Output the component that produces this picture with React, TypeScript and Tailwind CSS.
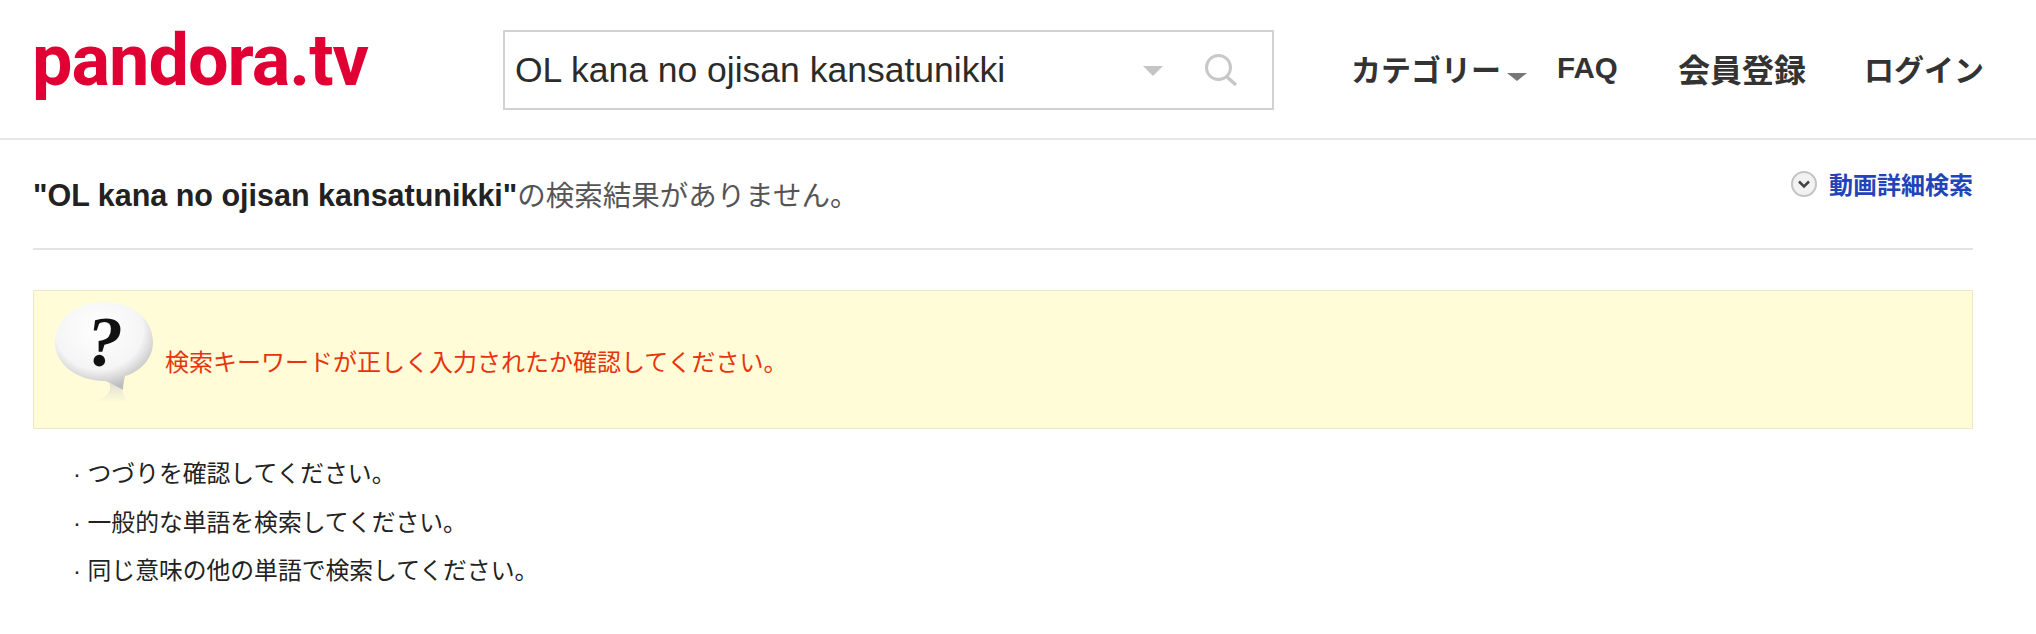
const JP = `font-['Liberation_Sans','Noto_Sans_CJK_JP',sans-serif]`;

const Bubble = () => (
  <svg width="100" height="100" viewBox="0 0 100 100" className="shrink-0 overflow-visible mb-[16px]">
    <defs>
      <radialGradient id="bub" cx="45%" cy="32%" r="66%">
        <stop offset="0%" stopColor="#ffffff" />
        <stop offset="68%" stopColor="#f5f5f5" />
        <stop offset="100%" stopColor="#bdbdbd" />
      </radialGradient>
      <linearGradient id="tail" x1="0" y1="0" x2="0" y2="1">
        <stop offset="0%" stopColor="#d8d8d8" />
        <stop offset="100%" stopColor="#fffcd7" />
      </linearGradient>
    </defs>
    <path d="M62 76 L72 100 L36 100 Q60 94 54 80 Z" fill="url(#tail)" />
    <path
      d="M49 0 C76 0 98 16 98 40 C98 58 84 70 70 74 C69 79 68 83 68 88 C62 85 57 81 50 79 C23 79 0 63 0 40 C0 16 23 0 49 0 Z"
      fill="url(#bub)"
    />
    <text
      x="50"
      y="64"
      textAnchor="middle"
      fontFamily="'Liberation Serif', serif"
      fontWeight="700"
      fontStyle="italic"
      fontSize="72"
      fill="#111111"
    >
      ?
    </text>
  </svg>
);

const SearchBox = () => (
  <div className="flex items-center w-[771px] h-[80px] mt-[2px] border-2 border-[#d2d2d2] pl-[10px] pr-[35px] shrink-0">
    <span className="flex-1 mt-[2px] text-[35.5px] text-[#2b2b2b] font-['Liberation_Sans',sans-serif]">
      OL kana no ojisan kansatunikki
    </span>
    <span className="w-0 h-0 border-x-[10px] border-x-transparent border-t-[10px] border-t-[#c4c4c4] mr-[42px] mt-[2px]" />
    <svg width="32" height="32" viewBox="0 0 32 32" fill="none" stroke="#c8c8c8">
      <circle cx="13.5" cy="13.5" r="12" strokeWidth="3" />
      <path d="M22 23 L31 31" strokeWidth="3.5" />
    </svg>
  </div>
);

const Nav = () => (
  <nav className={`flex items-start ml-[77px] text-[#333333] font-bold ${JP}`}>
    <span className="text-[30px] leading-[40px] mt-[4px] w-[150px] whitespace-nowrap">カテゴリー</span>
    <span className="w-0 h-0 border-x-[10px] border-x-transparent border-t-[8px] border-t-[#777777] mt-[26px] ml-[6px]" />
    <span className="text-[29.5px] leading-[34px] mt-[4px] ml-[30px] w-[62px]">FAQ</span>
    <span className="text-[32px] leading-[40px] mt-[4px] ml-[59px] w-[128px] whitespace-nowrap">会員登録</span>
    <span className="text-[30px] leading-[40px] mt-[4px] ml-[58px] whitespace-nowrap">ログイン</span>
  </nav>
);

export default function App() {
  return (
    <div className={`w-[2036px] h-[634px] bg-white overflow-hidden ${JP}`}>
      <header className="flex items-center h-[140px] border-b-2 border-[#e6e6e6] pl-[33px]">
        <div className="w-[470px] shrink-0 mb-[16px] -ml-[1px] mr-[1px] text-[72px] leading-[80px] font-bold text-[#e00034] tracking-[-1px] font-['Roboto',sans-serif]">
          pandora.tv
        </div>
        <SearchBox />
        <Nav />
      </header>

      <main className="pl-[33px] pr-[63px]">
        <div className="flex items-start justify-between h-[110px] border-b-2 border-[#e4e4e4]">
          <h1 className="mt-[35px] text-[28.5px] leading-[40px] text-[#555555] font-normal">
            <b className="text-[30.5px] text-[#222222] font-bold">"OL kana no ojisan kansatunikki"</b>の検索結果がありません。
          </h1>
          <a className="flex items-center mt-[28px] h-[36px] text-[24px] font-bold text-[#2244bb]">
            <svg width="26" height="26" viewBox="0 0 26 26" className="mr-[12px] -mt-[4px]">
              <circle cx="13" cy="13" r="12" fill="#f2f2f2" stroke="#c4c4c4" strokeWidth="2" />
              <path d="M8 10.5 L13 15.5 L18 10.5" fill="none" stroke="#444444" strokeWidth="2.5" />
            </svg>
            動画詳細検索
          </a>
        </div>

        <div className="flex items-center h-[139px] mt-[40px] pl-[21px] bg-[#fffcd7] border border-[#eee8c4]">
          <Bubble />
          <p className="ml-[10px] mt-[6px] text-[24px] text-[#e8340c]">
            検索キーワードが正しく入力されたか確認してください。
          </p>
        </div>

        <ul className="flex flex-col gap-[12.5px] mt-[27px] pl-[40px] text-[23.8px] leading-[36px] text-[#222222]">
          <li>· つづりを確認してください。</li>
          <li>· 一般的な単語を検索してください。</li>
          <li>· 同じ意味の他の単語で検索してください。</li>
        </ul>
      </main>
    </div>
  );
}
